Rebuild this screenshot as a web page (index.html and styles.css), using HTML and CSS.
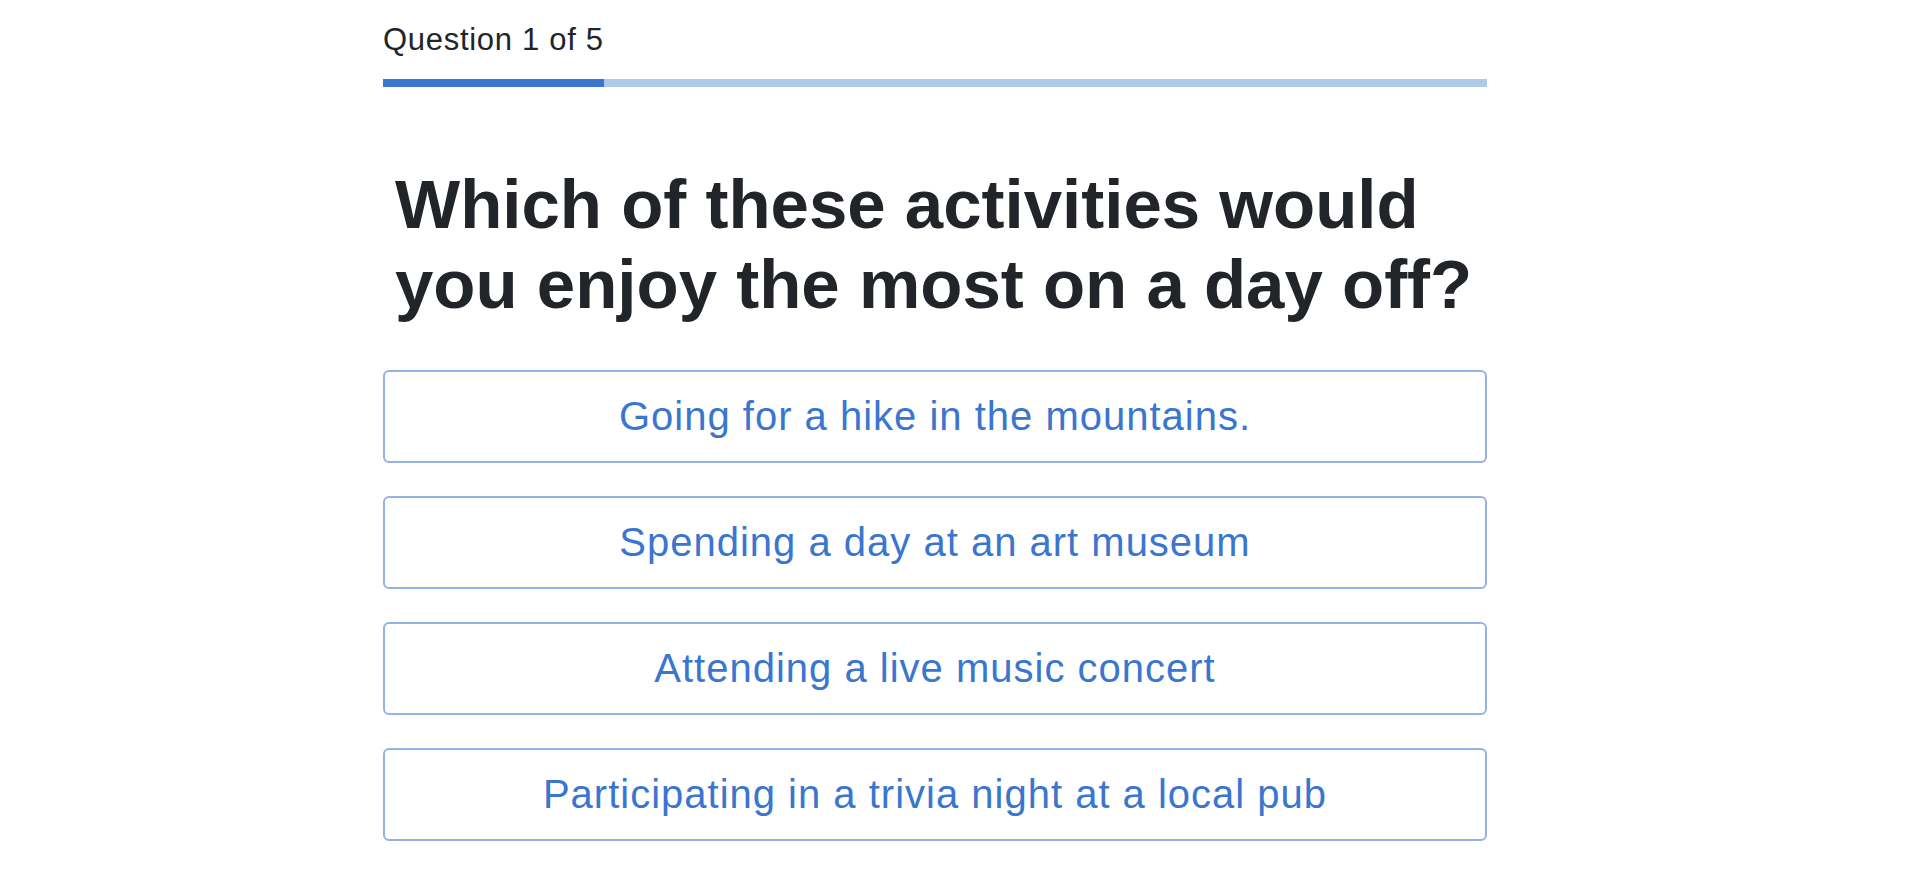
FILE: index.html
```html
<!DOCTYPE html>
<html>
<head>
<meta charset="utf-8">
<link rel="stylesheet" href="styles.css">
</head>
<body>
<main class="page">
  <section class="quiz">
    <div class="counter">Question 1 of 5</div>
    <div class="progress"><div class="progress-fill" style="width: 20%"></div></div>
    <h1 class="question">Which of these activities would you enjoy the most on a day off?</h1>
    <div class="options">
      <button class="option">Going for a hike in the mountains.</button>
      <button class="option">Spending a day at an art museum</button>
      <button class="option">Attending a live music concert</button>
      <button class="option">Participating in a trivia night at a local pub</button>
    </div>
  </section>
</main>
</body>
</html>
```
FILE: styles.css
```css
html, body {
  margin: 0;
  padding: 0;
  background: #ffffff;
}
body {
  font-family: "Liberation Sans", Arial, Helvetica, sans-serif;
  color: #212529;
}
.page {
  display: flex;
  padding-left: 383px;
}
.quiz {
  width: 1104px;
  display: flex;
  flex-direction: column;
}
.counter {
  font-size: 31px;
  letter-spacing: 0.7px;
  line-height: 45px;
  padding-top: 17px;
  color: #212529;
}
.progress {
  margin-top: 17px;
  height: 7.5px;
  background: #aecaeb;
  display: flex;
}
.progress-fill {
  background: #3a76d0;
  height: 100%;
}
.question {
  margin: 78px 0 0 0;
  padding: 0 0 0 12px;
  font-size: 69px;
  line-height: 80px;
  font-weight: 700;
  letter-spacing: 0;
  color: #212529;
}
.options {
  margin-top: 45px;
  display: flex;
  flex-direction: column;
  gap: 33px;
}
.option {
  height: 93px;
  border: 2px solid #93b3e8;
  border-radius: 6px;
  background: #ffffff;
  color: #3a76d0;
  font-family: "Liberation Sans", Arial, Helvetica, sans-serif;
  font-size: 40px;
  letter-spacing: 1px;
  text-align: center;
  padding: 0 20px;
  cursor: pointer;
}
```
